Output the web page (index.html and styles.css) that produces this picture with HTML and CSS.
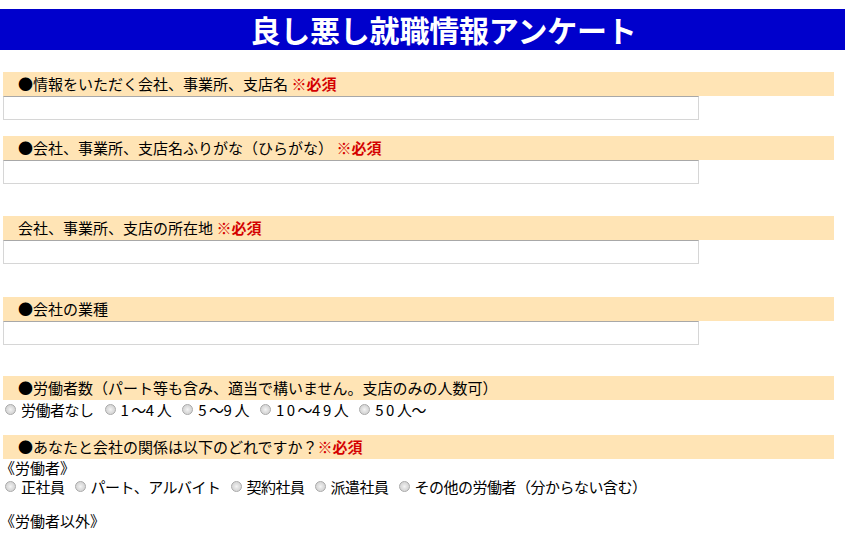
FILE: index.html
```html
<!DOCTYPE html>
<html lang="ja">
<head>
<meta charset="utf-8">
<title>良し悪し就職情報アンケート</title>
<link rel="stylesheet" href="styles.css">
</head>
<body>
<h1 class="title"><span class="title-text">良し悪し就職情報アンケート</span></h1>

<section class="q gap-22">
  <div class="qhead">●情報をいただく会社、事業所、支店名 <span class="req">※必須</span></div>
  <input class="field" type="text">
</section>

<section class="q gap-16">
  <div class="qhead">●会社、事業所、支店名ふりがな（ひらがな） <span class="req">※必須</span></div>
  <input class="field" type="text">
</section>

<section class="q gap-32">
  <div class="qhead">会社、事業所、支店の所在地 <span class="req">※必須</span></div>
  <input class="field" type="text">
</section>

<section class="q gap-33">
  <div class="qhead">●会社の業種</div>
  <input class="field" type="text">
</section>

<section class="q gap-31">
  <div class="qhead">●労働者数（パート等も含み、適当で構いません。支店のみの人数可）</div>
  <div class="opts opts-count">
    <label class="opt"><input class="radio" type="radio" name="n">労働者なし</label>
    <label class="opt"><input class="radio" type="radio" name="n"><span class="num">1</span>〜<span class="num">4</span>人</label>
    <label class="opt"><input class="radio" type="radio" name="n"><span class="num">5</span>〜<span class="num">9</span>人</label>
    <label class="opt"><input class="radio" type="radio" name="n"><span class="num">10</span>〜<span class="num">49</span>人</label>
    <label class="opt"><input class="radio" type="radio" name="n"><span class="num">50</span>人〜</label>
  </div>
</section>

<section class="q gap-16">
  <div class="qhead">●あなたと会社の関係は以下のどれですか？<span class="req">※必須</span></div>
  <div class="group">《労働者》</div>
  <div class="opts">
    <label class="opt"><input class="radio" type="radio" name="r">正社員</label>
    <label class="opt"><input class="radio" type="radio" name="r">パート、アルバイト</label>
    <label class="opt"><input class="radio" type="radio" name="r">契約社員</label>
    <label class="opt"><input class="radio" type="radio" name="r">派遣社員</label>
    <label class="opt"><input class="radio" type="radio" name="r">その他の労働者（分からない含む）</label>
  </div>
  <div class="group group-gap">《労働者以外》</div>
</section>
</body>
</html>
```

FILE: styles.css
```css
html, body {
  margin: 0;
  padding: 0;
  background: #ffffff;
}
body {
  padding-top: 9px;
  font-family: "Noto Sans CJK JP", "Noto Sans", sans-serif;
  font-size: 15px;
  color: #000000;
}
.title {
  margin: 0;
  width: 845px;
  height: 41px;
  background: #0000cc;
  color: #ffffff;
  font-size: 30px;
  font-weight: bold;
  line-height: 41px;
  text-align: center;
  box-sizing: border-box;
  padding-left: 42px;
}
.title-text {
  letter-spacing: -0.2px;
}
.q {
  display: flex;
  flex-direction: column;
  align-items: flex-start;
}
.gap-22 { margin-top: 22px; }
.gap-16 { margin-top: 16px; }
.gap-31 { margin-top: 31px; }
.gap-32 { margin-top: 32px; }
.gap-33 { margin-top: 33px; }
.qhead {
  margin-left: 3px;
  width: 831px;
  height: 24px;
  line-height: 24px;
  background: #ffe4b5;
  padding-left: 15px;
  box-sizing: border-box;
  white-space: nowrap;
}
.req {
  color: #d40000;
  font-weight: bold;
}
.field {
  margin: 0 0 0 3px;
  width: 696px;
  height: 24px;
  box-sizing: border-box;
  border: 1px solid #d6d6d6;
  border-top-color: #a8a8a8;
  background: #ffffff;
  padding: 0 2px;
  font: inherit;
}
.opts {
  display: flex;
  align-items: center;
  height: 19px;
  gap: 5px;
}
.opts-count {
  gap: 6px;
}
.opt {
  display: inline-flex;
  align-items: center;
  white-space: nowrap;
  line-height: 19px;
  letter-spacing: -0.5px;
}
.num {
  letter-spacing: 2.5px;
}
.radio {
  appearance: none;
  -webkit-appearance: none;
  width: 11px;
  height: 11px;
  margin: 0 5px 0 5px;
  border-radius: 50%;
  border: 1px solid #a9a9a9;
  background: radial-gradient(circle at 50% 50%, #f4f4f4 0, #dedede 45%, #cfcfcf 100%);
  box-sizing: border-box;
  flex: none;
}
.group {
  line-height: 18px;
  height: 18px;
}
.group-gap {
  margin-top: 16px;
}
```
